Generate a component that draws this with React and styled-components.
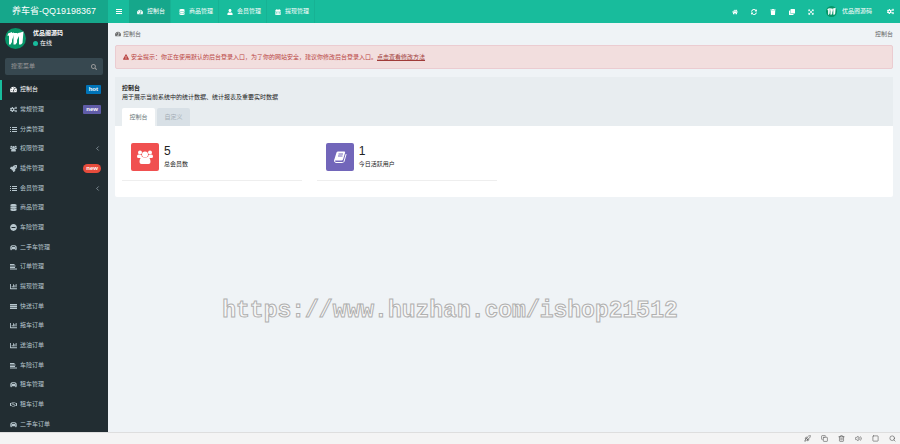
import React from 'react';
import styled, { createGlobalStyle } from 'styled-components';
import {
  FaCar,
  FaChartBar,
  FaClone,
  FaCogs,
  FaDatabase,
  FaExclamationTriangle,
  FaExpandArrowsAlt,
  FaHome,
  FaMinusCircle,
  FaRegHandshake,
  FaRocket,
  FaSearch,
  FaSyncAlt,
  FaTachometerAlt,
  FaTrash,
  FaUser,
  FaCalendarAlt,
} from 'react-icons/fa';
import {
  LuChevronLeft,
  LuCopy,
  LuRocket,
  LuSearch,
  LuSquare,
  LuTrash2,
  LuVolume2,
} from 'react-icons/lu';

const colors = {
  brand: '#18bc9c',
  brandDark: '#16a78b',
  sidebar: '#222d32',
  sidebarActive: '#1e282c',
  input: '#374850',
  menuText: '#b8c7ce',
  page: '#eff3f6',
  danger: '#b94442',
};

const GlobalStyle = createGlobalStyle`
  * {
    box-sizing: border-box;
  }
  body {
    margin: 0;
    font-family: 'Liberation Sans', 'Noto Sans CJK SC', sans-serif;
    font-size: 6px;
    line-height: 9px;
    color: #222;
    background: ${colors.page};
  }
  button,
  input {
    font: inherit;
    border: 0;
    padding: 0;
    background: none;
  }
  a {
    color: inherit;
    text-decoration: none;
  }
  svg {
    flex-shrink: 0;
  }
`;

const Page = styled.div`
  display: grid;
  grid-template-columns: 108px 1fr;
  grid-template-rows: 23px 1fr 12px;
  height: 100vh;
  overflow: hidden;
`;

const Brand = styled.a`
  display: flex;
  align-items: center;
  justify-content: center;
  font-size: 9px;
  color: #fff;
  background: ${colors.brandDark};
  white-space: nowrap;
`;

const Header = styled.header`
  display: flex;
  justify-content: space-between;
  color: #fff;
  background: ${colors.brand};
`;

const HeaderGroup = styled.nav`
  display: flex;
  align-items: stretch;
`;

const Toggle = styled.button`
  width: 21px;
  display: grid;
  place-items: center;
  color: #fff;
`;

const NavTab = styled.a`
  display: flex;
  align-items: center;
  gap: 4px;
  padding: 0 5px 0 8px;
  background: ${({ $active }) => ($active ? colors.brandDark : 'none')};
  border-right: 1px solid #17b294;
`;

const HeaderButton = styled.button`
  width: 19px;
  display: grid;
  place-items: center;
  color: #fff;
`;

const HeaderUser = styled.a`
  display: flex;
  align-items: center;
  gap: 5px;
  padding: 0 9px 0 5px;
`;

const Sidebar = styled.aside`
  display: flex;
  flex-direction: column;
  min-height: 0;
  overflow: hidden;
  color: ${colors.menuText};
  background: ${colors.sidebar};
`;

const UserPanel = styled.div`
  display: flex;
  gap: 7px;
  padding: 5px;
  color: #fff;
`;

const UserInfo = styled.div`
  padding-top: 1px;
`;

const UserName = styled.strong`
  display: block;
`;

const Status = styled.span`
  display: flex;
  align-items: center;
  gap: 2px;
  margin-top: 1px;

  &::before {
    content: '';
    width: 5px;
    height: 5px;
    border-radius: 50%;
    background: ${colors.brand};
  }
`;

const SearchForm = styled.form`
  display: flex;
  height: 17px;
  margin: 4px 5px;
  border-radius: 2px;
  background: ${colors.input};

  input {
    flex: 1;
    min-width: 0;
    padding-left: 6px;
    color: #fff;
    outline: 0;
  }
  input::placeholder {
    color: #999;
  }
  button {
    width: 18px;
    display: grid;
    place-items: center;
    color: #999;
  }
`;

const Menu = styled.ul`
  flex: 1;
  display: grid;
  grid-auto-rows: 1fr;
  margin: 1px 0 -2px;
  padding: 0;
  list-style: none;
`;

const MenuLink = styled.a`
  display: flex;
  align-items: center;
  gap: 3px;
  height: 100%;
  padding: 0 7px 0 8px;
  border-left: 2px solid
    ${({ $active }) => ($active ? colors.brand : 'transparent')};
  color: ${({ $active }) => ($active ? '#fff' : 'inherit')};
  background: ${({ $active }) =>
    $active ? colors.sidebarActive : 'none'};

  > :last-child:not(:nth-child(2)) {
    margin-left: auto;
  }
`;

const Tag = styled.span`
  padding: 0 3px;
  border-radius: ${({ $pill }) => ($pill ? 5 : 1)}px;
  font-weight: bold;
  line-height: 9px;
  color: #fff;
  background: ${({ $color }) => $color};
`;

const Main = styled.main`
  min-width: 0;
  padding: 0 7px;
`;

const Crumbs = styled.div`
  display: flex;
  justify-content: space-between;
  align-items: center;
  height: 22px;
  color: #666;

  span {
    display: flex;
    align-items: center;
    gap: 2px;
  }
`;

const Alert = styled.div`
  display: flex;
  align-items: center;
  gap: 2px;
  height: 24px;
  padding: 0 7px;
  border: 1px solid #ebccd1;
  border-radius: 2px;
  color: ${colors.danger};
  background: #f2dede;

  a {
    color: #a03b39;
    text-decoration: underline;
  }
`;

const Panel = styled.section`
  margin-top: 8px;
  border-radius: 2px;
  background: #fff;
`;

const PanelHead = styled.div`
  padding: 7px 7px 0;
  background: #e8edf0;

  h1 {
    margin: 0;
    font-size: 6px;
    line-height: 9px;
  }
  p {
    margin: 0;
  }
`;

const Tabs = styled.div`
  display: flex;
  gap: 2px;
  margin-top: 6px;
`;

const Tab = styled.button`
  min-width: 33px;
  height: 18px;
  border-radius: 2px 2px 0 0;
  color: ${({ $active }) => ($active ? '#6b7a7b' : '#a3adb5')};
  background: ${({ $active }) => ($active ? '#fff' : '#d8e0e6')};
`;

const Stats = styled.div`
  display: grid;
  grid-template-columns: repeat(4, 1fr);
  gap: 15px;
  padding: 9px 7px 16px;
`;

const Stat = styled.div`
  display: flex;
  gap: 5px;
  padding: 8px 9px 9px;
  border-bottom: 1px solid #eee;
`;

const StatIcon = styled.div`
  display: grid;
  place-items: center;
  width: 28px;
  height: 28px;
  border-radius: 2px;
  color: #fff;
  background: ${({ $color }) => $color};
`;

const StatValue = styled.strong`
  display: block;
  font-size: 12px;
  font-weight: normal;
  line-height: 17px;
`;

const Footer = styled.footer`
  grid-column: 1 / -1;
  display: flex;
  align-items: center;
  justify-content: flex-end;
  gap: 9px;
  padding-right: 4px;
  border-top: 1px solid #dedede;
  background: #f4f4f4;

  button {
    display: grid;
    place-items: center;
    width: 8px;
    height: 8px;
    color: #555;
  }
`;

const Watermark = styled.div`
  position: absolute;
  top: 70%;
  left: 50%;
  transform: translate(-50%, -50%);
  font: bold 23px / 30px 'Liberation Mono', monospace;
  color: #f8f8f8;
  -webkit-text-stroke: 1px #b0b0b0;
  pointer-events: none;
`;

const Logo = ({ size }) => (
  <svg width={size} height={size} viewBox="0 0 42 42">
    <circle cx="21" cy="21" r="21" fill="#079669" />
    <path
      d="M6 11l8-3v20l-3 5H8V15l-3 1zM17 10h7v19l-3 4h-4zM28 10l9-3-2 23-3 3h-4z"
      fill="#fff"
    />
    <path d="M14 10l4-1v5l-4 10zM24 11l5-2v5l-5 10z" fill="#fff" />
  </svg>
);

const Bars = () => (
  <svg width="6" height="5" viewBox="0 0 6 5" shapeRendering="crispEdges">
    <path d="M0 0h6v1H0zM0 2h6v1H0zM0 4h6v1H0z" fill="currentColor" />
  </svg>
);

const ListIcon = ({ size }) => (
  <svg width={size} height={size} viewBox="0 0 14 14">
    <path
      d="M0 2h2v2H0zM0 6h2v2H0zM0 10h2v2H0zM4 2h10v2H4zM4 6h10v2H4zM4 10h10v2H4z"
      fill="currentColor"
    />
  </svg>
);

const LinesIcon = ({ size }) => (
  <svg width={size} height={size} viewBox="0 0 14 14">
    <path
      d="M0 2h9v2H0zM0 5h11v2H0zM0 8h10v2H0zM0 11h14v2H0z"
      fill="currentColor"
    />
  </svg>
);

const StackIcon = ({ size }) => (
  <svg width={size} height={size} viewBox="0 0 14 14">
    <path
      d="M0 2h14v3H0zM0 6h14v2H0zM0 9h14v3H0z"
      fill="currentColor"
    />
  </svg>
);

const GroupIcon = ({ size }) => (
  <svg width={size} height={size} viewBox="0 0 32 32" fill="currentColor">
    <circle cx="6" cy="7" r="4" />
    <circle cx="26" cy="7" r="4" />
    <path d="M0 15q0-4 3-4l6 1q0 4 3 6H3q-3 0-3-3zM32 15q0-4-3-4l-6 1q0 4-3 6h9q3 0 3-3z" />
    <circle cx="16" cy="11" r="6" />
    <path d="M5 26q0-9 6-10 5 3 10 0 6 1 6 10 0 4-4 4H9q-4 0-4-4z" />
  </svg>
);

const BookIcon = ({ size }) => (
  <svg width={size} height={size} viewBox="0 0 28 28" fill="none">
    <path
      d="M10 3h13q2 0 1 3l-4 13q-1 2-3 2H4q-2 0-1-3L7 5q1-2 3-2z"
      fill="currentColor"
    />
    <path
      d="M3 20q-1 5 3 5h13q2 0 3-2l4-14"
      stroke="currentColor"
      strokeWidth="2"
      strokeLinecap="round"
    />
    <path d="M11 8h9M10 12h9" stroke="#7266ba" strokeWidth="2" />
  </svg>
);

const navTabs = [
  { icon: FaTachometerAlt, label: '控制台', active: true },
  { icon: FaDatabase, label: '商品管理' },
  { icon: FaUser, label: '会员管理' },
  { icon: FaCalendarAlt, label: '提现管理' },
];

const headerButtons = [
  { icon: FaHome, label: '主页' },
  { icon: FaSyncAlt, label: '刷新' },
  { icon: FaTrash, label: '清除缓存' },
  { icon: FaClone, label: '语言' },
  { icon: FaExpandArrowsAlt, label: '全屏' },
];

const menu = [
  {
    icon: FaTachometerAlt,
    label: '控制台',
    active: true,
    tag: 'hot',
    color: '#0073b7',
  },
  { icon: FaCogs, label: '常规管理', tag: 'new', color: '#605ca8' },
  { icon: ListIcon, label: '分类管理' },
  { icon: GroupIcon, label: '权限管理', arrow: true },
  {
    icon: FaRocket,
    label: '插件管理',
    tag: 'new',
    color: '#e74c3c',
    pill: true,
  },
  { icon: ListIcon, label: '会员管理', arrow: true },
  { icon: FaDatabase, label: '商品管理' },
  { icon: FaMinusCircle, label: '车险管理' },
  { icon: FaCar, label: '二手车管理' },
  { icon: LinesIcon, label: '订单管理' },
  { icon: FaChartBar, label: '提现管理' },
  { icon: StackIcon, label: '快送订单' },
  { icon: FaChartBar, label: '拖车订单' },
  { icon: FaChartBar, label: '送油订单' },
  { icon: LinesIcon, label: '车险订单' },
  { icon: FaCar, label: '租车管理' },
  { icon: FaRegHandshake, label: '租车订单' },
  { icon: FaCar, label: '二手车订单' },
];

const footerButtons = [
  { icon: LuRocket, label: '加速' },
  { icon: LuCopy, label: '应用' },
  { icon: LuTrash2, label: '清理' },
  { icon: LuVolume2, label: '声音' },
  { icon: LuSquare, label: '窗口' },
  { icon: LuSearch, label: '缩放' },
];

const App = () => (
  <>
    <GlobalStyle />
    <Page>
      <Brand href="#">养车省-QQ19198367</Brand>
      <Header>
        <HeaderGroup>
          <Toggle aria-label="菜单">
            <Bars />
          </Toggle>
          {navTabs.map(({ icon: Icon, label, active }) => (
            <NavTab key={label} href="#" $active={active}>
              <Icon size={6} />
              {label}
            </NavTab>
          ))}
        </HeaderGroup>
        <HeaderGroup>
          {headerButtons.map(({ icon: Icon, label }) => (
            <HeaderButton key={label} aria-label={label}>
              <Icon size={6} />
            </HeaderButton>
          ))}
          <HeaderUser href="#">
            <Logo size={11} />
            优品阁源码
          </HeaderUser>
          <HeaderButton aria-label="设置">
            <FaCogs size={7} />
          </HeaderButton>
        </HeaderGroup>
      </Header>

      <Sidebar>
        <UserPanel>
          <Logo size={21} />
          <UserInfo>
            <UserName>优品阁源码</UserName>
            <Status>在线</Status>
          </UserInfo>
        </UserPanel>
        <SearchForm>
          <input
            type="text"
            placeholder="搜索菜单"
            aria-label="搜索菜单"
          />
          <button type="button" aria-label="搜索">
            <FaSearch size={6} />
          </button>
        </SearchForm>
        <Menu>
          {menu.map(({ icon: Icon, label, active, ...item }) => (
            <li key={label}>
              <MenuLink href="#" $active={active}>
                <Icon size={7} />
                <span>{label}</span>
                {item.tag && (
                  <Tag $color={item.color} $pill={item.pill}>
                    {item.tag}
                  </Tag>
                )}
                {item.arrow && <LuChevronLeft size={7} />}
              </MenuLink>
            </li>
          ))}
        </Menu>
      </Sidebar>

      <Main>
        <Crumbs>
          <span>
            <FaTachometerAlt size={6} />
            控制台
          </span>
          <span>控制台</span>
        </Crumbs>
        <Alert role="alert">
          <FaExclamationTriangle size={6} />
          <span>
            安全提示：你正在使用默认的后台登录入口，为了你的网站安全，建议你修改后台登录入口。
            <a href="#">点击查看修改方法</a>
          </span>
        </Alert>
        <Panel>
          <PanelHead>
            <h1>控制台</h1>
            <p>用于展示当前系统中的统计数据、统计报表及重要实时数据</p>
            <Tabs>
              <Tab $active>控制台</Tab>
              <Tab>自定义</Tab>
            </Tabs>
          </PanelHead>
          <Stats>
            <Stat>
              <StatIcon $color="#f05050">
                <GroupIcon size={16} />
              </StatIcon>
              <div>
                <StatValue>5</StatValue>
                总会员数
              </div>
            </Stat>
            <Stat>
              <StatIcon $color="#7266ba">
                <BookIcon size={14} />
              </StatIcon>
              <div>
                <StatValue>1</StatValue>
                今日活跃用户
              </div>
            </Stat>
          </Stats>
        </Panel>
      </Main>

      <Footer>
        {footerButtons.map(({ icon: Icon, label }) => (
          <button key={label} type="button" aria-label={label}>
            <Icon size={7} />
          </button>
        ))}
      </Footer>
    </Page>
    <Watermark>https://www.huzhan.com/ishop21512</Watermark>
  </>
);

export default App;
